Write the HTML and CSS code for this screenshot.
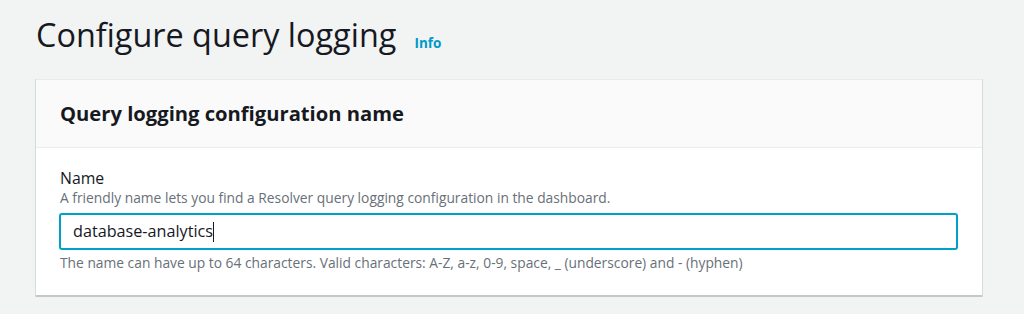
FILE: index.html
```html
<!DOCTYPE html>
<html>
<head>
  <title>Configure query logging</title>
  <link rel="stylesheet" href="styles.css">
</head>
<body>

  <div class="page-header">
    <h1>Configure query logging</h1>
    <a href="#" class="info-link">Info</a>
  </div>

  <div class="container">
    <div class="container-header">
      <h2>Query logging configuration name</h2>
    </div>
    <div class="container-body">
      <label class="field-label" for="name">Name</label>
      <div class="field-description">A friendly name lets you find a Resolver query logging configuration in the dashboard.</div>
      <div class="text-input" id="name">database-analytics<span class="caret"></span></div>
      <div class="field-constraint">The name can have up to 64 characters. Valid characters: A-Z, a-z, 0-9, space, _ (underscore) and - (hyphen)</div>
    </div>
  </div>

</body>
</html>
```

FILE: styles.css
```css
body {
  font-family: 'Open Sans', sans-serif;
  background: #f2f3f3;
  color: #16191f;
  margin: 0;
  padding: 13px 42px 0 36px;
}

.page-header {
  height: 43px;
  margin-bottom: 23px;
  white-space: nowrap;
}

h1 {
  display: inline;
  font-size: 32.4px;
  font-weight: 400;
  margin: 0 14px 0 0;
  line-height: 43px;
}

.info-link {
  color: #0099c9;
  font-size: 13.5px;
  font-weight: 700;
  text-decoration: none;
  vertical-align: -1px;
}

.container {
  background: #fff;
  border-top: 1px solid #e6ebeb;
  border-bottom: 2px solid #c3c9cb;
  box-shadow: 1px 0 0 0 #d5dbdb, -1px 0 0 0 #d5dbdb, 0 1px 1px 0 rgba(0,28,36,0.15);
}

.container-header {
  background: #fafafa;
  border-bottom: 1px solid #eaeded;
  padding: 19px 24px 20px;
}

h2 {
  font-size: 20.2px;
  font-weight: 700;
  margin: 0;
  line-height: 28px;
}

.container-body {
  padding: 19px 24px 23px 24px;
}

.field-label {
  display: block;
  font-size: 15.8px;
  line-height: 22px;
}

.field-description {
  font-size: 13.8px;
  line-height: 18px;
  color: #687078;
}

.text-input {
  margin: 6px 0 0 -1px;
  width: calc(100% + 1px);
  box-sizing: border-box;
  height: 37px;
  border: 2px solid #00a1c9;
  border-radius: 3px;
  padding: 0 12px;
  font-size: 16.2px;
  line-height: 33px;
}

.caret {
  display: inline-block;
  width: 1px;
  height: 20px;
  background: #16191f;
  vertical-align: -5px;
}

.field-constraint {
  margin-top: 4px;
  font-size: 13.8px;
  line-height: 18px;
  color: #687078;
}
```
